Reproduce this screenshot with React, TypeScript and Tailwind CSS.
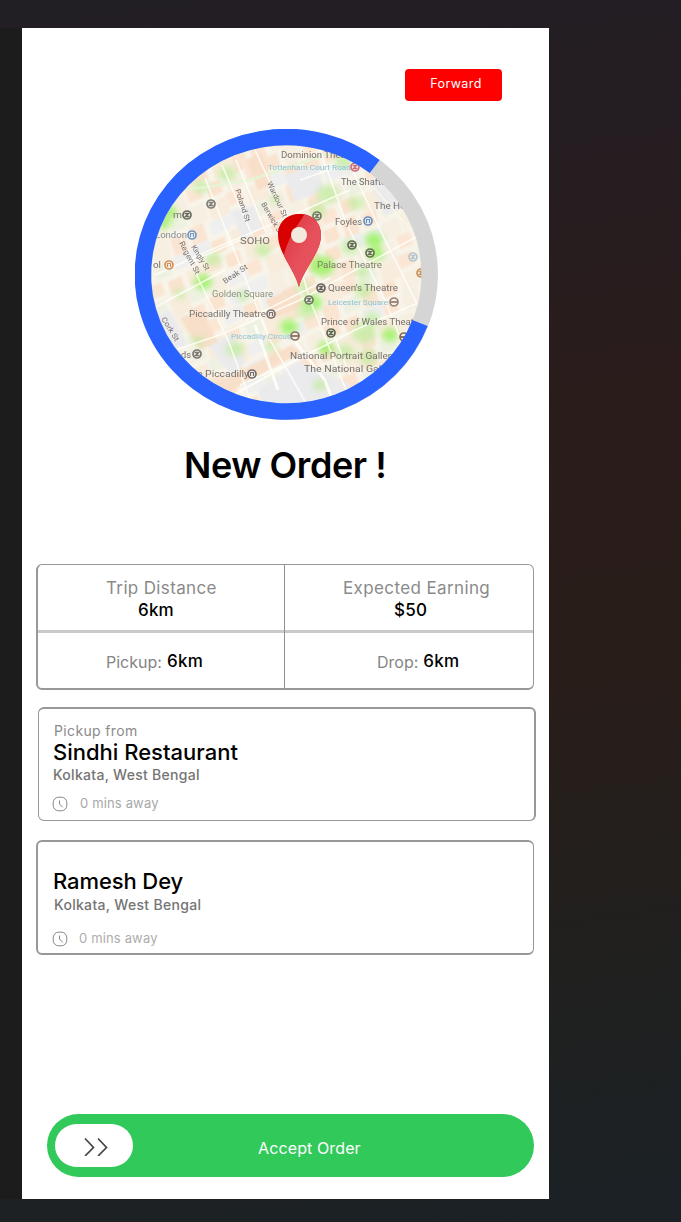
import React from 'react';

type Label = { t: string; x: number; y: number; w?: number; r?: number; c?: string; s?: number };

const GREY = '#77706e';
const BLUE = '#8cc3d4';

const labels: Label[] = [
  { t: 'Dominion Theatre', x: 281, y: 158, w: 76 },
  { t: 'Tottenham Court Road', x: 268, y: 170, w: 83, c: BLUE, s: 8 },
  { t: 'The Shaftesbury', x: 341, y: 185, w: 68 },
  { t: 'The Hospital', x: 374, y: 209, w: 56 },
  { t: 'Foyles', x: 335, y: 225, w: 27 },
  { t: 'SOHO', x: 240, y: 244, w: 30, s: 9 },
  { t: 'Palace Theatre', x: 317, y: 268, w: 65, c: '#7c7d67' },
  { t: "Queen's Theatre", x: 328, y: 291, w: 70 },
  { t: 'Leicester Square', x: 328, y: 305, w: 60, c: BLUE, s: 8 },
  { t: 'Prince of Wales Theatre', x: 321, y: 325, w: 101 },
  { t: 'National Portrait Gallery', x: 290, y: 359, w: 106 },
  { t: 'The National Gallery', x: 304, y: 372, w: 94 },
  { t: 'Golden Square', x: 212, y: 297, w: 61, c: '#8d957d' },
  { t: 'Piccadilly Theatre', x: 189, y: 317, w: 77 },
  { t: 'Piccadilly Circus', x: 231, y: 339, w: 60, c: BLUE, s: 8 },
  { t: 'e Piccadilly', x: 197, y: 377, w: 52 },
  { t: 'ds', x: 181, y: 358, w: 10 },
  { t: 'm', x: 173, y: 218, w: 9 },
  { t: 'London', x: 155, y: 238, w: 32, c: '#858d94' },
  { t: 'ol', x: 153, y: 268, w: 8 },
  { t: 'Poland St', x: 235, y: 190, w: 34, r: 72, s: 7.5 },
  { t: 'Wardour St', x: 267, y: 183, w: 38, r: 65, s: 7.5 },
  { t: 'Berwick St', x: 261, y: 204, w: 36, r: 60, s: 7.5 },
  { t: 'Kingly St', x: 191, y: 247, w: 28, r: 58, s: 7.5 },
  { t: 'Regent St', x: 179, y: 243, w: 36, r: 62, s: 7.5 },
  { t: 'Beak St', x: 225, y: 284, w: 28, r: -34, s: 7.5 },
  { t: 'Cork St', x: 161, y: 319, w: 27, r: 58, s: 7.5 },
];

const markers: [number, number, string][] = [
  [187, 215, '#6a6b5c'], [211, 204, '#807c76'], [317, 216, '#6d7d5b'], [352, 245, '#5f6a4b'],
  [370, 253, '#5f7449'], [321, 288, '#66645a'], [309, 300, '#6f7863'], [331, 333, '#5d664e'],
  [197, 354, '#7c746f'], [271, 314, '#7e706b'], [252, 374, '#776e6a'], [192, 235, '#7297c4'],
  [368, 221, '#6a8fc3'], [169, 265, '#d6915a'], [355, 167, '#cf6c78'], [394, 302, '#9a8277'],
  [295, 336, '#8b7160'], [404, 337, '#80654f'], [413, 257, '#b7c4ca'], [421, 273, '#c99256'],
];

const parks: [number, number, number, boolean][] = [
  [201, 187, 8, false], [227, 174, 9, false], [170, 212, 7, true], [163, 222, 8, true], [213, 259, 8, false],
  [203, 282, 9, true], [243, 296, 6, false], [180, 294, 6, false], [328, 194, 11, false], [344, 161, 9, false],
  [356, 203, 8, false], [318, 210, 8, false], [350, 247, 9, false], [374, 240, 9, true], [376, 254, 8, true],
  [322, 266, 12, true], [303, 287, 7, false], [312, 303, 10, true], [289, 327, 9, true], [306, 311, 9, false],
  [363, 290, 9, false], [372, 319, 8, false], [326, 348, 8, true], [364, 333, 12, false], [390, 335, 8, true],
  [235, 349, 9, false], [271, 347, 6, false], [263, 250, 8, false], [198, 341, 6, false], [368, 357, 9, false],
  [362, 272, 7, false], [320, 385, 7, false], [345, 352, 9, false], [275, 200, 5, false],
];

function Blocks() {
  const colors = ['#fae3cf', '#f6efe2', '#efeff0', '#fae4d2', '#eef1e2', '#f8ecdc', '#fbe6d4'];
  const out: React.ReactElement[] = [];
  for (let i = 0; i < 19; i++) {
    for (let j = 0; j < 22; j++) {
      const k = (i * 7 + j * 5 + ((i * j) % 4) * 3 + ((i + j) % 3)) % 7;
      out.push(
        <rect
          key={`${i}-${j}`}
          x={-190 + i * 21 + ((j * 5) % 7) * 2}
          y={-190 + j * 18 + ((i * 3) % 5)}
          width={15 + (k % 3) * 2.6}
          height={13 + (k % 2) * 4.5}
          fill={colors[k]}
        />,
      );
    }
  }
  return <g transform="translate(287 275) rotate(-24) skewX(-7)">{out}</g>;
}

function MapRing() {
  return (
    <svg className="block h-[291px] w-[303px]" viewBox="135 129 303 291" aria-label="Pickup map">
      <defs>
        <clipPath id="mapClip"><ellipse cx="286.5" cy="274.5" rx="136" ry="130" /></clipPath>
        <clipPath id="pinClip"><path d="M299 287C294 268 278 253 278 235C278 222 287 214 299.500 214S321 222 321 235C321 253 304 268 299 287Z" /></clipPath>
        <filter id="soft" x="-50%" y="-50%" width="200%" height="200%"><feGaussianBlur stdDeviation="3" /></filter>
        <filter id="tiny"><feGaussianBlur stdDeviation="1" /></filter>
        <filter id="ink"><feGaussianBlur stdDeviation=".4" /></filter>
        <linearGradient id="pinShine" x1="0" y1="0" x2="1" y2="1">
          <stop offset="0" stopColor="#dd3038" /><stop offset=".5" stopColor="#e5505b" /><stop offset="1" stopColor="#e75561" />
        </linearGradient>
      </defs>
      <g clipPath="url(#mapClip)">
        <rect x="145" y="135" width="285" height="280" fill="#f8f4ea" />
        <g filter="url(#tiny)">
          <Blocks />
          <path d="M208 345L232 334L246 362L232 376ZM300 362L350 384L332 406L262 406L258 390ZM232 212L254 205L262 228L242 240ZM285 175L318 165L324 190L295 202ZM152 318L170 310L188 345L172 350ZM368 180L395 172L410 205L385 215Z" fill="#ebebed" />
          <path d="M212 385L292 345L300 353L225 394ZM180 318L202 311L218 342L200 350ZM246 160L262 153L272 185L258 190ZM266 300L296 286L304 306L274 318Z" fill="#f8dfc9" />
        </g>
        <g filter="url(#soft)">
          {parks.map(([x, y, r, bright], i) => (
            <ellipse key={i} cx={x} cy={y} rx={r} ry={r * 0.85} fill={bright ? '#9af262' : '#c0ec9d'} opacity={bright ? 0.85 : 0.75} />
          ))}
        </g>
        <g fill="none" stroke="#fffef8" strokeWidth="1.600" filter="url(#ink)" opacity=".85">
          <path d="M150 190C190 191 215 186 250 180L340 150" stroke="#e6f5d6" strokeWidth="3" />
          <path d="M178 232L200 282L228 340L252 405M160 355L220 335L300 300L420 235M215 405L285 366L355 330L425 300M205 178L240 265L270 340L310 410M255 150L285 215L310 300L350 400M320 150L347 225L385 300L405 350M155 275L215 248L270 225L350 190M150 310L225 270M225 400L315 350M350 165L385 240L425 320M240 385L300 358M222 165L252 235M236 160L266 232M190 262L240 240M246 320L330 278M330 325L350 375M300 180L335 168" />
          <path d="M290 335L325 380L336 410M255 325L278 390" strokeWidth="3" />
          <path d="M345 155L420 240M353 148L428 235" stroke="#fbf8e4" />
        </g>
        <g fontFamily="Roboto, sans-serif" filter="url(#ink)">
          {labels.map((l) => (
            <text
              key={l.t}
              x={l.x}
              y={l.y}
              fontSize={l.s ?? 9}
              fill={l.c ?? GREY}
              textLength={l.w}
              lengthAdjust="spacingAndGlyphs"
              transform={l.r ? `rotate(${l.r} ${l.x} ${l.y})` : undefined}
            >
              {l.t}
            </text>
          ))}
        </g>
        <g filter="url(#ink)">
          {markers.map(([x, y, c], i) => (
            <g key={i}>
              <circle cx={x} cy={y} r="4" fill="#f3f1ea" stroke={c} strokeWidth="1.700" />
              {i >= 15 && i <= 17 ? (
                <path d={`M${x - 4} ${y}H${x + 4}`} stroke={c} strokeWidth="1.800" />
              ) : i >= 9 && i <= 13 ? (
                <path d={`M${x - 1.5} ${y + 2}V${y - 1.5}H${x + 1.5}V${y + 2}`} fill="none" stroke={c} strokeWidth="1.200" />
              ) : (
                <path d={`M${x - 2.5} ${y - 1.5}H${x + 1.5}L${x - 1.5} ${y + 1.5}H${x + 2.5}`} fill="none" stroke={c} strokeWidth="1.500" />
              )}
            </g>
          ))}
        </g>
      </g>
      <g clipPath="url(#pinClip)">
        <rect x="276" y="212" width="48" height="76" fill="#d90000" />
        <path d="M306 212C298 225 286 240 283 260L299 290L324 260V212Z" fill="url(#pinShine)" />
      </g>
      <circle cx="299" cy="235" r="8" fill="#f2ebdd" />
      <ellipse cx="286.500" cy="274.500" rx="143.250" ry="137.250" fill="none" stroke="#d5d5d5" strokeWidth="16.500" />
      <path d="M374.700 166.500A143.250 137.250 0 1 0 420 323" fill="none" stroke="#2962ff" strokeWidth="16.500" />
    </svg>
  );
}

function Clock() {
  return (
    <svg className="h-4 w-4 shrink-0" viewBox="0 0 16 16" fill="none" stroke="#858585">
      <rect x="1.200" y="1.200" width="13.600" height="13.600" rx="5.500" strokeWidth="1" />
      <path d="M7.500 4.500V8L10.700 11.300" strokeWidth="1" />
    </svg>
  );
}

export default function App() {
  return (
    <div className="flex h-[1222px] w-[681px] flex-col overflow-hidden bg-[linear-gradient(172deg,#221f24_0%,#241d22_14%,#2a1c1b_36%,#281d19_58%,#20201f_80%,#1b2125_98%)] pt-7 font-['Inter',sans-serif] whitespace-nowrap">
      <div className="flex h-[1171px]">
        <div className="w-[22px] bg-[#1c1c1c]" />
        <main className="flex w-[527px] flex-col bg-white">
          <button className="mt-[41px] ml-[383px] flex h-8 w-[97px] justify-center rounded-[4px] bg-[#ff0000] pt-[5px] pl-[5px] text-[12.500px] leading-[19px] tracking-[0.4px] text-white">Forward</button>
          <div className="mt-7 ml-[113px]"><MapRing /></div>
          <h1 className="mt-[21px] ml-[162px] h-12 text-[36px] leading-[48px] font-semibold tracking-[-0.44px] text-black">New Order !</h1>

          <section className="mt-[75px] ml-[14px] h-[126px] w-[498px] rounded-[6px] border border-b-2 border-l-2 border-[#989898]">
            <div className="flex h-[65px]">
              <div className="w-[247px] border-r border-[#909090] pt-3">
                <div className="ml-[68px] h-[22px] text-[17px] leading-[22px] tracking-[0.35px] text-[#8a8a8a]">Trip Distance</div>
                <div className="ml-[100px] text-[17px] leading-[22px] font-medium tracking-[0.2px] text-black">6km</div>
              </div>
              <div className="pt-3">
                <div className="ml-[58px] h-[22px] text-[17px] leading-[22px] tracking-[0.38px] text-[#8a8a8a]">Expected Earning</div>
                <div className="ml-[109px] text-[17px] leading-[22px] font-medium tracking-[0.3px] text-black">$50</div>
              </div>
            </div>
            <div className="h-[3px] bg-[#c9c9c9]"><div className="h-full w-[247px] border-r border-[#909090]" /></div>
            <div className="flex h-[55px]">
              <div className="flex w-[247px] gap-[5px] border-r border-[#909090] pt-[17px] pl-[68px] text-[17px] leading-[22px]">
                <span className="mt-px text-[16px] text-[#858585]">Pickup:</span><span className="font-medium tracking-[0.3px] text-black">6km</span>
              </div>
              <div className="flex gap-[5px] pt-[17px] pl-[92px] text-[17px] leading-[22px]">
                <span className="mt-px text-[16px] text-[#858585]">Drop:</span><span className="font-medium tracking-[0.3px] text-black">6km</span>
              </div>
            </div>
          </section>

          <section className="mt-[17px] ml-4 h-[114px] w-[498px] rounded-[6px] border border-t-2 border-r-2 border-[#989898] pt-[13px] pl-[14px]">
            <div className="ml-px h-[18px] text-[14px] leading-[18px] tracking-[0.35px] text-[#8b8b8b]">Pickup from</div>
            <div className="h-6 text-[22px] leading-6 font-medium text-black">Sindhi Restaurant</div>
            <div className="h-[22px] text-[14px] leading-[22px] font-medium tracking-[0.29px] text-[#747474]">Kolkata, West Bengal</div>
            <div className="mt-2 -ml-px flex h-5 items-center gap-3 text-[13px] tracking-[0.15px] text-[#a8a8a8]"><Clock /><span>0 mins away</span></div>
          </section>

          <section className="mt-[19px] ml-[14px] h-[115px] w-[498px] rounded-[6px] border-2 border-r border-[#989898] pt-[26px] pl-[15px]">
            <div className="h-[26px] text-[22px] leading-[26px] font-medium tracking-[-0.1px] text-black">Ramesh Dey</div>
            <div className="ml-px h-[22px] text-[14px] leading-[21px] font-medium tracking-[0.31px] text-[#747474]">Kolkata, West Bengal</div>
            <div className="mt-[13px] -ml-px flex h-5 items-center gap-[11px] text-[13px] tracking-[0.15px] text-[#adadad]"><Clock /><span>0 mins away</span></div>
          </section>

          <button className="mt-[159px] ml-[25px] flex h-[63px] w-[487px] items-center rounded-full bg-[#31c959] pl-2">
            <span className="flex h-[43px] w-[78px] items-center rounded-full bg-white">
              <svg className="ml-7 h-5 w-7" viewBox="0 0 28 20" fill="none" stroke="#454545" strokeWidth="1.700">
                <path d="M2 2.500L10.500 11.500L2 20M15 2.500L23.500 11.500L15 20" />
              </svg>
            </span>
            <span className="mt-1 ml-[125px] text-[16px] leading-6 tracking-[0.12px] text-white">Accept Order</span>
          </button>
        </main>
      </div>
    </div>
  );
}
